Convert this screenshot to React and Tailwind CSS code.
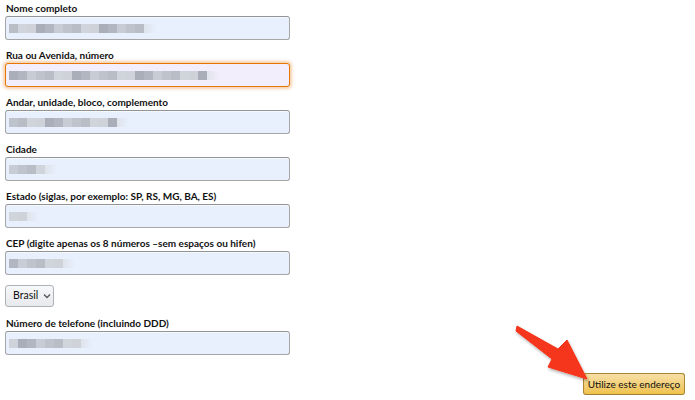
import React from "react";

const font = { fontFamily: 'Lato, "Liberation Sans", Arial, sans-serif' };

const shades = ["bg-[#b9bdc6]", "bg-[#c8ccd4]", "bg-[#a9aeb8]", "bg-[#d0d4db]", "bg-[#bfc3cb]", "bg-[#b2b6c0]", "bg-[#cfd2d9]"];

function Blur({ n, seed = 0 }) {
  const blocks = [];
  for (let i = 0; i < n; i++) {
    blocks.push(<div key={i} className={"h-[9px] w-[9px] " + shades[(i * 3 + seed) % shades.length]} />);
  }
  return (
    <div className="flex items-center blur-[0.6px]">
      {blocks}
      <div className="h-[9px] w-[12px] bg-gradient-to-r from-[#dfe3ea] to-transparent" />
    </div>
  );
}

function Field({ label, n, seed, focus }) {
  return (
    <div className="flex flex-col">
      <div className="text-[10px] font-bold text-[#111] leading-[13px] pl-[6px] pt-[2px] h-[13px] whitespace-nowrap">{label}</div>
      <div
        className={
          "mt-[3px] ml-[5px] w-[285px] h-[24px] rounded-[3px] flex items-center pl-[3px] " +
          (focus
            ? "bg-[#f2eefb] border border-[#e77600] shadow-[0_0_3px_2px_rgba(228,121,17,0.35)]"
            : "bg-[#e8f0fe] border border-[#a6a6a6] border-t-[#949494] shadow-[inset_0_1px_0_rgba(255,255,255,0.5)]")
        }
      >
        <Blur n={n} seed={seed} />
      </div>
    </div>
  );
}

export default function App() {
  return (
    <div className="relative w-[695px] h-[400px] bg-white overflow-hidden" style={font}>
      <div className="flex flex-col">
        <div className="flex flex-col gap-[7px]">
          <Field label="Nome completo" n={15} seed={0} />
          <Field label="Rua ou Avenida, número" n={22} seed={2} focus />
          <Field label="Andar, unidade, bloco, complemento" n={12} seed={4} />
          <Field label="Cidade" n={4} seed={1} />
          <Field label="Estado (siglas, por exemplo: SP, RS, MG, BA, ES)" n={2} seed={3} />
          <Field label="CEP (digite apenas os 8 números –sem espaços ou hifen)" n={6} seed={5} />
        </div>
        <div className="mt-[10px] ml-[5px] w-[49px] h-[22px] rounded-[3px] border border-[#adb1b8] bg-gradient-to-b from-[#f7f8fa] to-[#e7e9ec] flex items-center pl-[7px] gap-[5px] text-[10.5px] text-[#111]">
          <span>Brasil</span>
          <svg width="8" height="6" viewBox="0 0 8 6"><path d="M1 1.5 L4 4.5 L7 1.5" fill="none" stroke="#555" strokeWidth="1.3" /></svg>
        </div>
        <div className="mt-[8px]">
          <Field label="Número de telefone (incluindo DDD)" n={8} seed={6} />
        </div>
      </div>

      <div className="absolute left-[583px] top-[373px] w-[102px] h-[22px] rounded-[3px] border border-[#a88734] border-b-[#9c7e31] bg-gradient-to-b from-[#f7dfa5] to-[#f0c14b] flex items-center justify-center text-[10px] text-[#111] whitespace-nowrap">
        Utilize este endereço
      </div>

      <svg className="absolute left-0 top-0 pointer-events-none" width="695" height="400">
        <defs>
          <filter id="sh" x="-20%" y="-20%" width="140%" height="140%">
            <feDropShadow dx="1" dy="2" stdDeviation="1.5" floodColor="#000" floodOpacity="0.3" />
          </filter>
        </defs>
        <polygon
          points="517,326 558,349 567,340 587,379 548,367 552,359 516,331"
          fill="#f5341a"
          stroke="#f5341a"
          strokeWidth="1"
          strokeLinejoin="round"
          filter="url(#sh)"
        />
      </svg>
    </div>
  );
}
